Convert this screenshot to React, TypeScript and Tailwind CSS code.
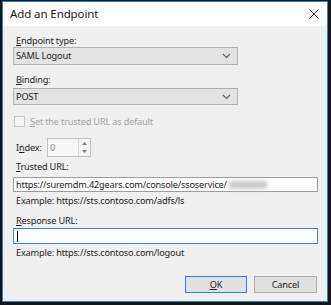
import React from "react";

const font = { fontFamily: '"Noto Sans", "Open Sans", Arial, sans-serif' };

function Chevron() {
  return (
    <svg width="9" height="6" viewBox="0 0 9 6" className="absolute right-[6px] top-1/2 -translate-y-1/2">
      <path d="M1 1 L4.5 4.5 L8 1" fill="none" stroke="#5a5a5a" strokeWidth="1.1" />
    </svg>
  );
}

export default function App() {
  return (
    <div className="w-[331px] h-[305px] bg-[#141414] pt-px pl-[2px] pr-[3px] pb-[3px]" style={font}>
      <div className="w-full h-full border border-[#2f83d3] flex flex-col bg-[#f0f0f0]">
        <div className="h-[24px] bg-white flex items-center justify-between pl-[7px] pr-[7px] shrink-0">
          <span className="text-[11.5px] text-[#1a1a1a] leading-none tracking-[-0.1px]">Add an Endpoint</span>
          <svg width="10" height="10" viewBox="0 0 10 10" className="mr-[1px]">
            <path d="M0.5 0.5 L9.5 9.5 M9.5 0.5 L0.5 9.5" stroke="#2a2a2a" strokeWidth="1" />
          </svg>
        </div>
        <div className="flex flex-col pl-[10px] pr-[10px] text-[9.2px] tracking-[-0.18px] text-[#1c1c1c]">
          <div className="mt-[9px] h-[12px] leading-[12px] pl-[3px]">
            <span className="underline underline-offset-1">E</span>ndpoint type:
          </div>
          <div className="relative w-[225px] h-[18px] border border-[#b0b0b0] bg-[#e3e3e3] leading-[16px] pl-[2px]">
            SAML Logout
            <Chevron />
          </div>
          <div className="mt-[9px] h-[12px] leading-[12px] pl-[3px]">
            <span className="underline underline-offset-1">B</span>inding:
          </div>
          <div className="relative mt-[2px] w-[225px] h-[17px] border border-[#b0b0b0] bg-[#e3e3e3] leading-[15px] pl-[2px]">
            POST
            <Chevron />
          </div>
          <div className="mt-[10px] h-[13px] flex items-center text-[#a3a3a3]">
            <div className="w-[11px] h-[11px] border border-[#c8c8c8] bg-[#f4f4f4] ml-px"></div>
            <span className="ml-[5px]">
              <span className="underline underline-offset-1">S</span>et the trusted URL as default
            </span>
          </div>
          <div className="mt-[10px] h-[19px] flex items-center">
            <span className="pl-[3px] w-[34px]">
              I<span className="underline underline-offset-1">n</span>dex:
            </span>
            <div className="w-[44px] h-[19px] border border-[#c4c4c4] bg-[#f6f6f6] flex">
              <span className="flex-1 pl-[2px] leading-[17px] text-[#8a8a8a]">0</span>
              <div className="w-[12px] flex flex-col border-l border-[#d8d8d8]">
                <div className="flex-1 flex items-center justify-center">
                  <svg width="5" height="3" viewBox="0 0 5 3"><path d="M0 3 L2.5 0 L5 3Z" fill="#7a7a7a" /></svg>
                </div>
                <div className="flex-1 flex items-center justify-center">
                  <svg width="5" height="3" viewBox="0 0 5 3"><path d="M0 0 L2.5 3 L5 0Z" fill="#7a7a7a" /></svg>
                </div>
              </div>
            </div>
          </div>
          <div className="mt-[4px] h-[12px] leading-[12px] pl-[3px]">
            <span className="underline underline-offset-1">T</span>rusted URL:
          </div>
          <div className="mt-[4px] w-[305px] h-[15px] border border-[#9c9c9c] bg-white leading-[13px] pl-[2px] flex items-center">
            <span>https://suremdm.42gears.com/console/ssoservice/</span>
            <span className="ml-[2px] w-[38px] h-[8px] bg-[#c9c9c9] blur-[2px]"></span>
          </div>
          <div className="mt-[3px] h-[12px] leading-[12px] pl-[3px]">Example: https://sts.contoso.com/adfs/ls</div>
          <div className="mt-[8px] h-[12px] leading-[12px] pl-[3px]">
            <span className="underline underline-offset-1">R</span>esponse URL:
          </div>
          <div className="mt-[1px] w-[305px] h-[16px] border border-[#3a86cc] bg-white flex items-center pl-[3px]">
            <div className="w-px h-[11px] bg-black"></div>
          </div>
          <div className="mt-[3px] h-[12px] leading-[12px] pl-[3px]">Example: https://sts.contoso.com/logout</div>
          <div className="mt-[17px] flex justify-end gap-[7px]">
            <div className="w-[62px] h-[17px] border border-[#2f7fcf] bg-[#e1e1e1] flex items-center justify-center">
              <span className="underline underline-offset-1">O</span>K
            </div>
            <div className="w-[63px] h-[17px] border border-[#adadad] bg-[#e1e1e1] flex items-center justify-center">
              Cancel
            </div>
          </div>
        </div>
      </div>
    </div>
  );
}
